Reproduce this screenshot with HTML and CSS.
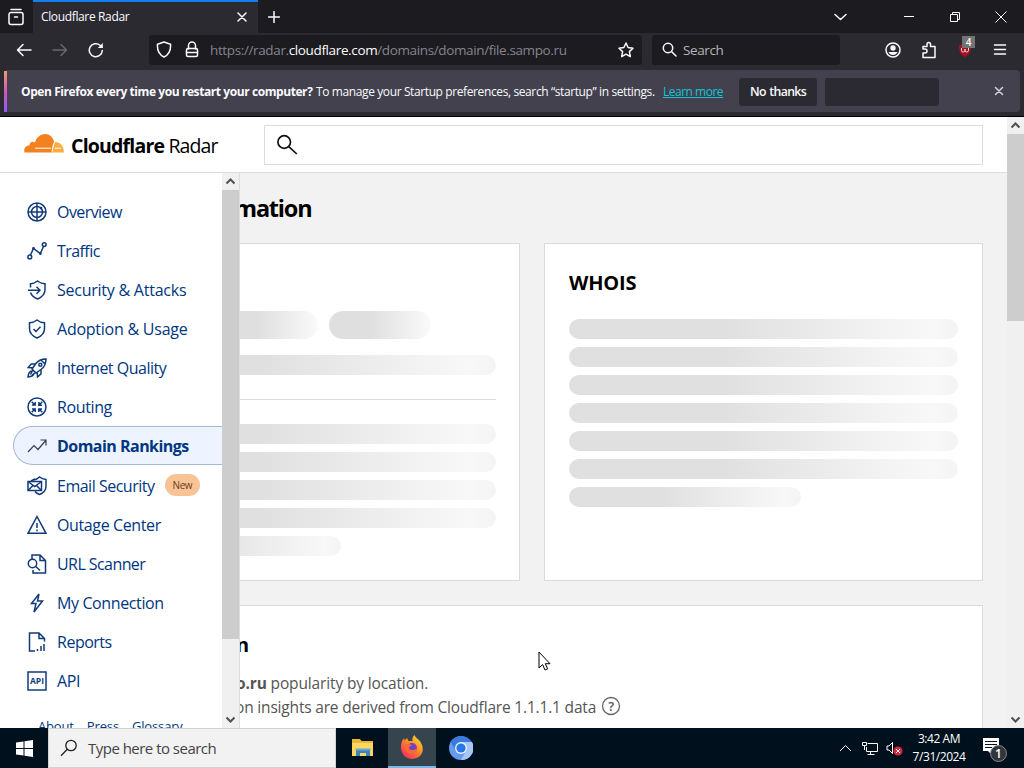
FILE: index.html
```html
<!DOCTYPE html>
<html lang="en">
<head>
<meta charset="utf-8">
<title>Cloudflare Radar</title>
<link rel="stylesheet" href="styles.css">
</head>
<body>
<div class="tabbar">
  <div class="firefox-view"><svg width="18" height="18" viewBox="0 0 18 18" class="ln light"><path d="M4 1.500h10M4 4.500h10a2 2 0 0 1 2 2v8a2 2 0 0 1-2 2H4a2 2 0 0 1-2-2v-8a2 2 0 0 1 2-2zM7.500 9h3"/></svg></div>
  <div class="tab"><span>Cloudflare Radar</span><svg width="10" height="10" viewBox="0 0 10 10" class="ln light"><path d="M1 1l8 8M9 1L1 9"/></svg></div>
  <svg class="ln light newtab" width="12" height="12" viewBox="0 0 12 12"><path d="M6 .5v11M.5 6h11"/></svg>
  <div class="window-controls">
    <svg class="ln light" width="13" height="12" viewBox="0 0 13 12"><path d="M1 3.500l5.500 5L12 3.500"/></svg>
    <svg class="thin light" width="11" height="12" viewBox="0 0 11 12"><path d="M0 5.500h10"/></svg>
    <svg class="thin light" width="12" height="12" viewBox="0 0 12 12"><path d="M1.500 3.500h7v7h-7zM3.500 3.500v-2h7v7h-2"/></svg>
    <svg class="thin light" width="12" height="12" viewBox="0 0 12 12"><path d="M.5.5l11 11M11.500.5l-11 11"/></svg>
  </div>
</div>
<div class="toolbar">
  <svg class="ln light back" width="16" height="14" viewBox="0 0 16 14"><path d="M15 7H1.500M7 1.500L1.500 7 7 12.500"/></svg>
  <svg class="ln dim fwd" width="16" height="14" viewBox="0 0 16 14"><path d="M1 7h13.500M9 1.500L14.500 7 9 12.500"/></svg>
  <svg class="ln light reload" width="16" height="16" viewBox="0 0 16 16"><path d="M14.300 8.500A6.500 6.500 0 1 1 12 3.200l2 2"/><path d="M14.800 1v5h-5z" fill="#fbfbfe" stroke="none"/></svg>
  <div class="url">
    <svg class="ln light" width="16" height="17" viewBox="0 0 16 17"><path d="M8 1l6.500 2.300c.5 6-1.500 10.300-6.500 12.700C3 13.600 1 9.300 1.500 3.300z"/></svg>
    <svg class="ln light lock" width="14" height="17" viewBox="0 0 14 17"><path d="M3.500 8V4.500a3.500 3.500 0 0 1 7 0V8M1.500 11.500h11"/><rect x="1.500" y="7.500" width="11" height="8" rx="1.500"/></svg>
    <span class="address">https://radar.<b>cloudflare.com</b>/domains/domain/file.sampo.ru</span>
    <svg class="ln light star" width="16" height="16" viewBox="0 0 16 16"><path d="M8 1l2.100 4.500 4.900.7-3.600 3.400.9 5L8 12.200l-4.300 2.400.9-5L1 6.200l4.900-.7z"/></svg>
  </div>
  <div class="searchbar"><svg class="ln light" width="15" height="15" viewBox="0 0 15 15"><circle cx="6" cy="6" r="4.700"/><path d="M9.500 9.500l4.500 4.500"/></svg><span>Search</span></div>
  <div class="tools">
    <svg class="ln light" width="16" height="16" viewBox="0 0 16 16"><circle cx="8" cy="8" r="7"/><g fill="#fbfbfe" stroke="none"><circle cx="8" cy="6" r="2.700"/><path d="M3.500 10h9c-.7 1.800-2.500 3-4.500 3s-3.800-1.200-4.500-3z"/></g></svg>
    <svg class="ln light" width="16" height="18" viewBox="0 0 16 18"><path d="M2 16.500V12h2a2 2 0 0 0 0-4H2V5.500h4V3.200a1.700 1.700 0 0 1 3.500 0v2.300H14v11z"/></svg>
    <div class="ublock"><svg width="16" height="16" viewBox="0 0 16 16"><path d="M8 1c2 1.500 4 2 6 2 0 6-1 9.500-6 12C3 12.500 2 9 2 3c2 0 4-.5 6-2z" fill="#a8101b"/><path d="M4.500 6v2.500q0 1.500 1.700 1.500T8 8.500V7v1.500q0 1.500 1.700 1.500t1.800-1.500V6" fill="none" stroke="#ddd"/></svg><span class="count">4</span></div>
    <svg class="ln light" width="14" height="14" viewBox="0 0 14 14"><path d="M1.500 2h11M1.500 6.500h11M1.500 11h11"/></svg>
  </div>
</div>
<div class="notice-wrap"><div class="notice">
  <b>Open Firefox every time you restart your computer?</b><span class="msg">To manage your Startup preferences, search “startup” in settings.</span><a>Learn more</a>
  <div class="button nothanks">No thanks</div><div class="button empty"></div>
  <svg class="ln close" width="10" height="10" viewBox="0 0 10 10"><path d="M1.500 1.500l7 7M8.500 1.500l-7 7"/></svg>
</div></div>

<div class="page">
  <div class="site">
    <header>
      <svg class="cloud" width="40" height="20" viewBox="0 0 40 20"><path d="M.5 18.500c-1-4 1-7 5-7-.5-3 3-5 5.500-3C12.500 3 17 0 21 0c4.500 0 8 3 9 7.500L28 18.500z" fill="#f48120"/><path d="M28 18.500L31 8c5 0 9 4 8.800 10.500z" fill="#faad3f"/><path d="M11 14.200h16M31 14.200h6M29.500 9.500l-1.500 8" stroke="#fff" fill="none"/></svg>
      <div class="brand"><b>Cloudflare</b> <span>Radar</span></div>
      <div class="site-search"><svg width="22" height="22" viewBox="0 0 22 22" fill="none" stroke="#111" stroke-width="1.700"><circle cx="8.200" cy="8" r="6.300"/><path d="M12.800 12.600l8 7.400"/></svg></div>
    </header>
    <div class="body">
      <main>
        <h1>mation</h1>
        <div class="cards">
          <section class="card general">
            <div class="pills"><i></i><i></i></div>
            <div class="bar"></div><hr>
            <div class="bars"><div class="bar"></div><div class="bar"></div><div class="bar"></div><div class="bar"></div><div class="bar short"></div></div>
          </section>
          <section class="card whois"><h2>WHOIS</h2>
            <div class="bars"><div class="bar"></div><div class="bar"></div><div class="bar"></div><div class="bar"></div><div class="bar"></div><div class="bar"></div><div class="bar short"></div></div>
          </section>
        </div>
        <section class="card location"><h2>n</h2>
          <p class="pop"><b>o.ru</b> popularity by location.</p>
          <p class="ins"><span>on insights are derived from Cloudflare 1.1.1.1 data</span><svg width="20" height="20" viewBox="0 0 20 20"><circle cx="10" cy="10" r="8.500" fill="none" stroke="#666" stroke-width="1.300"/><text x="10" y="14.500" text-anchor="middle">?</text></svg></p>
        </section>
      </main>
      <aside>
        <nav>
          <a class="tight"><svg viewBox="0 0 20 20"><circle cx="10" cy="10" r="9"/><circle cx="10" cy="10" r="5.500"/><path d="M10 1v18M1 10h18"/><circle cx="14" cy="6" r=".6"/></svg><span>Overview</span></a>
          <a class="tight"><svg viewBox="0 0 20 20"><circle cx="2.800" cy="16" r="1.900"/><circle cx="17.200" cy="3.600" r="1.900"/><path d="M3.500 14L6.500 7.500l6.800 5L16.500 5.500"/><circle cx="6.500" cy="7.500" r=".7"/><circle cx="13.300" cy="12.500" r=".7"/></svg><span>Traffic</span></a>
          <a class="loose"><svg viewBox="0 0 20 20"><path d="M3.500 7.500V3.700C6.500 3.700 8.500 2.500 10.500 1c2 1.500 4 2.700 7.500 2.700v6c0 4-3 7.300-7.500 9.300-3.500-1.500-6-3.500-7-6.500M1 10.200h12M9.500 6.700l3.500 3.500-3.500 3.500"/></svg><span>Security &amp; Attacks</span></a>
          <a class="loose"><svg viewBox="0 0 20 20"><path d="M10 1c2 1.700 4.500 2.700 7.500 2.700v6c0 4-3 7.300-7.500 9.300-4.500-2-7.500-5.300-7.500-9.300v-6C5.500 3.700 8 2.700 10 1zM6.500 10L9 12.500l4.500-4.700"/></svg><span>Adoption &amp; Usage</span></a>
          <a class="snug"><svg viewBox="0 0 20 20"><path d="M19 1c-5 0-8 1.500-10.500 5L5 11l4 4 5-3.500C17.500 9 19 6 19 1zM8.500 6H4.200L1.200 9.500 6 9.700M14 11.500v4.300L10.500 19l-.3-4.700M4.500 13C2 13.500 1.300 16 1 19c3-.3 5.500-1 6-3.500M6 11.500l-2.500 5M9 14l-4 3M14 2l4 4"/><circle cx="13.300" cy="6.700" r="1.500"/></svg><span>Internet Quality</span></a>
          <a><svg viewBox="0 0 20 20"><circle cx="10" cy="10" r="9"/><path d="M4.700 4.700l3.500 3.500M15.300 4.700l-3.500 3.500M4.700 15.300l3.500-3.500M15.300 15.300l-3.500-3.500M5 8h3.200V5M12 5l-.2 3.200H15M5 12h3.200v3M15 12h-3.200v3"/></svg><span>Routing</span></a>
          <a class="active"><svg viewBox="0 0 20 20"><path d="M1 16l6-6.500 4 4L18.700 4.500M13.500 4h5.500v5.500"/></svg><span>Domain Rankings</span></a>
          <a class="snug"><svg viewBox="0 0 20 20"><rect x="1" y="5.500" width="13.500" height="9"/><path d="M1 5.500l6.700 5 6.800-5M1 14.500l5-5M14.500 14.500l-5-5M6.500 4C9 3.500 11 2.500 12.500 1c2 1.700 4 2.300 6.500 2.500v6.500c0 4-2.500 7-6.500 8.500-2-.7-3.500-1.700-4.500-3M4 5l4-2"/></svg><span>Email Security</span><em>New</em></a>
          <a><svg viewBox="0 0 20 20"><path d="M10 1.500L19 18.300H1zM10 8v5M10 14.500v1.700"/></svg><span>Outage Center</span></a>
          <a class="tight"><svg viewBox="0 0 20 20"><path d="M5 5V1h8l5.500 5.500V19H6v-3M13 1v5.500h5.500M8.800 12.500l4.200 4"/><circle cx="5.500" cy="9.500" r="4.200"/></svg><span>URL Scanner</span></a>
          <a><svg viewBox="0 0 20 20"><path d="M12 1L4.500 10.500H9L7 19l8.500-11h-5z"/></svg><span>My Connection</span></a>
          <a class="snug"><svg viewBox="0 0 20 20"><path d="M8 19H2.500V1H12l5.500 5.500v3M12 1v5.500h5.500M10.500 19v-2M14 19v-5M17 19v-7"/></svg><span>Reports</span></a>
          <a class="api"><svg viewBox="0 0 20 20"><rect x="1" y="1" width="18" height="18"/><text x="10" y="13.300" text-anchor="middle">API</text></svg><span>API</span></a>
          <div class="links"><span>About</span><span>Press</span><span>Glossary</span></div>
        </nav>
        <div class="scroll"><svg width="11" height="8" viewBox="0 0 11 8"><path d="M1.500 6.500l4-4 4 4"/></svg><div class="thumb"></div><svg width="11" height="8" viewBox="0 0 11 8"><path d="M1.500 1.500l4 4 4-4"/></svg></div>
      </aside>
      <svg class="pointer" width="13" height="20" viewBox="0 0 13 20"><path d="M1 1v16l3.600-3.400L7 19l2.700-1.200-2.400-5.100H12z" fill="#fff" stroke="#000"/></svg>
    </div>
  </div>
  <div class="scroll main-scroll"><svg width="11" height="8" viewBox="0 0 11 8"><path d="M1.500 6.500l4-4 4 4"/></svg><div class="thumb"></div><svg width="11" height="8" viewBox="0 0 11 8"><path d="M1.500 1.500l4 4 4-4"/></svg></div>
</div>

<div class="taskbar">
  <div class="start"><svg width="17" height="17" viewBox="0 0 17 17" fill="#fff"><path d="M0 2.400L7.500 1.400V8H0zM8.500 1.200L17 0v8H8.500zM0 9h7.500v6.600L0 14.600zM8.500 9H17v8l-8.500-1.200z"/></svg></div>
  <div class="task-search"><svg width="18" height="18" viewBox="0 0 18 18" fill="none" stroke="#222" stroke-width="1.300"><circle cx="11" cy="6.500" r="5.200"/><path d="M7.300 10.200L1 16.700"/></svg><span>Type here to search</span></div>
  <div class="app"><svg width="22" height="20" viewBox="0 0 22 20"><path d="M0 1h8l1.500 2H21v15H0z" fill="#e9b53a"/><path d="M0 5h21v13H0z" fill="#fbd75e"/><path d="M4 18v-6.500h14V18h-4v-3H8v3z" fill="#3a84bd"/><path d="M3.500 10.500h15v2h-15z" fill="#69a9d6"/></svg></div>
  <div class="app current"><svg width="24" height="24" viewBox="0 0 24 24"><defs><linearGradient id="fx" x1="1" y1="0" x2=".2" y2="1"><stop offset="0" stop-color="#ffe847"/><stop offset=".45" stop-color="#ff9722"/><stop offset="1" stop-color="#f52566"/></linearGradient></defs><path d="M1 13C.5 8 2.500 5 4 3l.7 2.500L7 3l1.500 3h4C12 3 13 1.500 14.500 0c1 3 4 4 6 7 6 10-1 17-8.500 17C6 24 1.500 19.500 1 13z" fill="url(#fx)"/><circle cx="12" cy="13" r="5" fill="#7542c7"/><path d="M5 10c3-2 6-1 7 1-3 0-3 1-3 2 1 3 5 3 8 0 0 4-4 6-8 5-4-2-5-5-4-8z" fill="#ff6a30"/></svg></div>
  <div class="app"><svg width="24" height="24" viewBox="0 0 24 24"><circle cx="12" cy="12" r="12" fill="#629bf0"/><path d="M12 6h11a12 12 0 0 1-11 18l5-9z" fill="#a7c7fa"/><path d="M1.800 6A12 12 0 0 1 22.500 6H12L7 15z" fill="#397ade"/><circle cx="12" cy="12" r="6" fill="#eaf2ff"/><circle cx="12" cy="12" r="4.600" fill="#2977e4"/></svg></div>
  <div class="tray">
    <svg class="thin light" width="13" height="8" viewBox="0 0 13 8"><path d="M1 7l5.500-5.500L12 7"/></svg>
    <svg class="thin light net" width="17" height="15" viewBox="0 0 17 15"><path d="M5.500 2.500h10v8h-11V6M8.500 10.500v3M5.500 13.500h7M.5 1.500h4v3h-4zM2.500 4.500V9"/></svg>
    <svg class="vol" width="17" height="15" viewBox="0 0 17 15"><path d="M1 5h2l3.500-3.500v11L3 9H1z" fill="none" stroke="#fff"/><circle cx="12" cy="10" r="4.500" fill="#d92837"/><path d="M10 8l4 4M14 8l-4 4" stroke="#fff"/></svg>
    <div class="clock"><span>3:42 AM</span><span>7/31/2024</span></div>
    <svg class="action" width="26" height="26" viewBox="0 0 26 26"><path d="M1 1h16v13H9v3l-3-3H1z" fill="#fff"/><path d="M3 4.500h12M3 7.500h12M3 10.500h7" stroke="#06121d"/><circle cx="16.500" cy="16.500" r="8" fill="#30363c" stroke="#858a8e"/><text x="16.500" y="21" text-anchor="middle">1</text></svg>
  </div>
</div>
</body>
</html>
```
FILE: styles.css
```css
* { box-sizing: border-box; }
body { margin: 0; width: 1024px; height: 768px; overflow: hidden; display: flex; flex-direction: column; font-family: "Open Sans", "Noto Sans", sans-serif; background: #000; white-space: nowrap; }
svg { flex: none; display: block; }
.ln { fill: none; stroke-width: 1.500; stroke-linecap: round; stroke-linejoin: round; }
.thin { fill: none; stroke-width: 1; }
.light { stroke: #fbfbfe; }
.dim { stroke: #68686e; }

.tabbar { height: 33px; flex: none; display: flex; align-items: center; background: #1c1b20; color: #fbfbfe; }
.firefox-view { width: 33px; padding-left: 7px; }
.tab { width: 225px; height: 33px; display: flex; align-items: center; justify-content: space-between; padding: 0 11px 2px 8px; background: #2b2a31; border-top: 2px solid #137ff3; font-size: 12px; letter-spacing: -.36px; }
.newtab { margin-left: 10px; }
.window-controls { margin-left: auto; display: flex; align-items: center; padding-right: 17px; }
.window-controls svg:nth-child(2) { margin-left: 57px; }
.window-controls svg:nth-child(3) { margin-left: 34px; }
.window-controls svg:nth-child(4) { margin-left: 34px; }

.toolbar { height: 33px; flex: none; display: flex; align-items: center; background: #2b2a31; padding-left: 16px; }
.fwd { margin-left: 20px; }
.reload { margin-left: 20px; }
.url { margin-left: 45px; width: 493px; height: 30px; display: flex; align-items: center; background: #1c1b20; padding: 0 8px 0 7px; border-radius: 3px; }
.lock { margin-left: 13px; }
.address { margin-left: 11px; font-size: 13.500px; color: #85858c; letter-spacing: -.37px; }
.address b { font-weight: 400; color: #fbfbfe; }
.star { margin-left: auto; }
.searchbar { margin-left: 10px; width: 188px; height: 30px; display: flex; align-items: center; gap: 6px; padding-left: 10px; background: #1c1b20; color: #b5b5bb; font-size: 13.500px; letter-spacing: -.4px; border-radius: 3px; }
.tools { margin-left: auto; display: flex; align-items: center; gap: 20px; padding-right: 17px; }
.ublock { position: relative; }
.count { position: absolute; left: 5px; top: -6px; width: 13px; height: 12px; background: #737373; color: #fff; font-size: 10px; line-height: 12px; text-align: center; font-weight: 600; }

.notice-wrap { height: 51px; flex: none; background: #2b2a31; padding: 4px 4px 5px; border-bottom: 1px solid #000; }
.notice { height: 42px; display: flex; align-items: center; background: #42414d; border-top: 1px solid #595862; border-left: 3px solid #d465a5; border-image: linear-gradient(#ef9c6e, #cc59b8, #9059ff) 0 0 0 3; border-radius: 4px; padding-left: 14px; color: #fbfbfe; font-size: 12px; }
.notice b { letter-spacing: -.42px; width: 295px; }
.msg { letter-spacing: -.39px; width: 347px; }
.notice a { color: #12c5d6; text-decoration: underline; width: 76px; letter-spacing: -.5px; }
.button { height: 28px; background: #2b2a33; border-radius: 3px; line-height: 28px; text-align: center; font-weight: 600; letter-spacing: -.65px; word-spacing: 1px; font-size: 12.300px; }
.nothanks { width: 78px; }
.empty { width: 114px; margin-left: 8px; }
.close { margin: 0 16px 2px auto; stroke: #d5d5dc; }

.page { height: 611px; flex: none; display: flex; background: #fff; }
.site { width: 1007px; flex: none; display: flex; flex-direction: column; }
header { height: 56px; flex: none; display: flex; align-items: center; border-bottom: 1px solid #dcdcdc; padding-left: 24px; }
.cloud { margin-bottom: 1px; }
.brand { width: 193px; margin-left: 7px; padding-top: 1px; font-size: 19.500px; color: #000; letter-spacing: -.9px; }
.brand b { font-weight: 700; letter-spacing: -.8px; }
.site-search { width: 719px; height: 40px; border: 1px solid #dcdcdc; display: flex; align-items: center; padding-left: 11px; }
.body { position: relative; height: 555px; overflow: hidden; background: #f2f2f2; }

main { padding-left: 81px; }
h1 { margin: 0; height: 70px; padding: 18px 0 0 153px; font-size: 23.500px; line-height: 35px; letter-spacing: -1.200px; color: #000; }
.cards { display: flex; gap: 24px; }
.card { background: #fff; border: 1px solid #dadada; width: 439px; height: 338px; padding: 24px; }
h2 { margin: 0; font-size: 20px; line-height: 30px; letter-spacing: -.2px; color: #000; }
.bars { display: grid; gap: 8px; }
.bar { height: 20px; border-radius: 10px; background: linear-gradient(90deg, #e0e0e0 40%, #f8f8f8 93%, #f4f4f4); }
.whois .bars { margin-top: 21px; }
.whois .short { width: 232px; }
.general { padding-top: 67px; padding-right: 23px; }
.pills { display: flex; gap: 11px; padding-left: 110px; margin-bottom: 16px; }
.pills i { width: 102px; height: 28px; border-radius: 14px; background: linear-gradient(90deg, #dfdfdf 40%, #fafafa); }
hr { border: 0; height: 1px; background: #ddd; margin: 24px 0; }
.general .short { width: 235px; }
.location { width: 902px; height: 200px; margin-top: 24px; }
.location h2 { padding: 0 0 0 130px; }
.location p { margin: 0; font-size: 15.500px; color: #555; }
.location .pop { padding-left: 130px; margin-top: 11px; line-height: 24px; letter-spacing: -.14px; }
.ins { display: flex; align-items: center; gap: 5px; padding-left: 129px; line-height: 24px; letter-spacing: -.18px; }
.ins svg { margin-bottom: 2px; }
.ins text { font-size: 13px; font-weight: 600; fill: #555; }

aside { position: absolute; left: 0; top: 0; width: 240px; height: 555px; display: flex; border-right: 1px solid #ddd; background: #fff; }
nav { width: 222px; height: 555px; overflow: hidden; padding-top: 19px; color: #003681; }
nav a { height: 39px; display: flex; align-items: center; padding-left: 27px; font-size: 16px; letter-spacing: -.38px; }
nav .tight { letter-spacing: -.57px; }
nav .snug { letter-spacing: -.49px; }
nav .loose { letter-spacing: -.24px; }
nav a svg { width: 20px; height: 20px; margin-right: 10px; fill: none; stroke: #113b78; stroke-width: 1.500; }
nav .active { height: 39px; margin: 0 0 1px 13px; padding-left: 13px; border: 1px solid #a4b8d8; border-right: 0; border-radius: 20px 0 0 20px; background: #edf4ff; font-weight: 700; letter-spacing: -.53px; }
nav .active svg { stroke-width: 1.200; stroke: #333f55; }
nav em { height: 22px; margin: -2px 0 0 10px; padding: 0 8px; border-radius: 11px; background: #f9c396; color: #6b3b16; font-size: 10px; line-height: 23px; font-style: normal; letter-spacing: -.4px; }
nav .api text { font-size: 8.500px; font-weight: 700; fill: #113b78; stroke: none; letter-spacing: 0; }
.links { display: flex; gap: 13px; padding: 17px 0 0 38px; font-size: 13px; line-height: 18px; letter-spacing: -.15px; }

.scroll { width: 17px; flex: none; display: flex; flex-direction: column; align-items: center; background: #f0f0f0; padding: 4px 0; }
.scroll svg { fill: none; stroke: #505050; stroke-width: 2; }
.scroll .thumb { width: 17px; height: 449px; margin: 5px 0 auto; background: #cdcdcd; }
.main-scroll .thumb { height: 187px; }
.pointer { position: absolute; left: 538px; top: 478px; }

.taskbar { height: 40px; flex: none; display: flex; align-items: stretch; background: #00111d; color: #fff; }
.start { width: 48px; display: flex; align-items: center; justify-content: center; }
.task-search { width: 288px; display: flex; align-items: center; gap: 10px; padding-left: 11px; background: #f2f2f2; border: 1px solid #d2d2d2; color: #444; font-size: 15px; letter-spacing: -.52px; }
.app { width: 49px; display: flex; align-items: center; justify-content: center; }
.app:nth-child(3) { width: 52px; padding-left: 2px; }
.current { background: #35444d; border-bottom: 2px solid #76b9ed; width: 48px; }
.tray { margin-left: auto; display: flex; align-items: center; padding-right: 16px; }
.net { margin-left: 10px; }
.vol { margin-left: 7px; }
.clock { width: 72px; display: flex; flex-direction: column; align-items: center; font-size: 12px; line-height: 18px; letter-spacing: -.45px; }
.action { margin-left: 7px; margin-top: 4px; }
.action text { font-size: 12px; font-weight: 600; fill: #fff; }
```
